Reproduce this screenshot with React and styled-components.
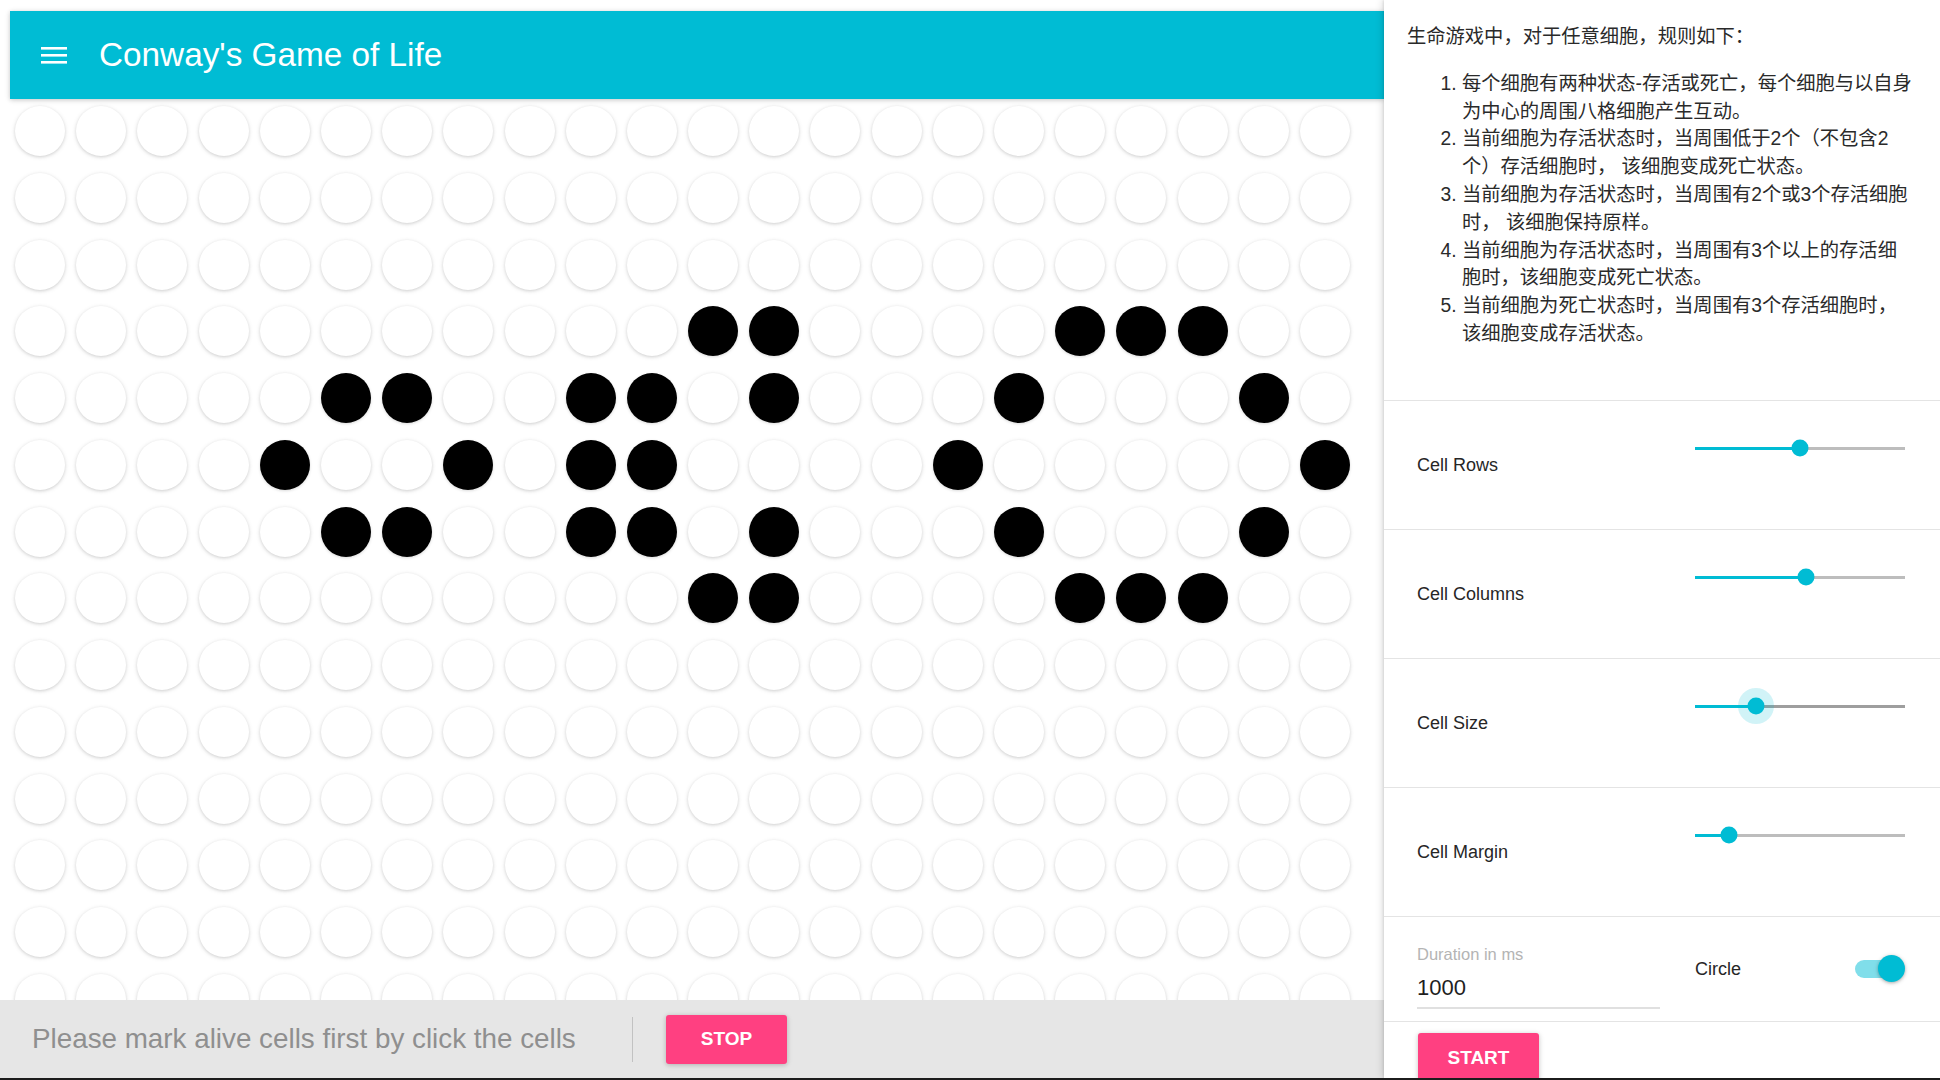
import React from "react";
import styled, { createGlobalStyle } from "styled-components";

const Global = createGlobalStyle`
  html, body { margin: 0; padding: 0; background: #1c1c1c; overflow: hidden; }
  body { font-family: "Liberation Sans", "Noto Sans CJK SC", sans-serif; }
  *, *::before, *::after { box-sizing: border-box; }
`;

const Page = styled.div`
  display: flex;
  width: 1940px;
  height: 1078px;
  background: #fff;
  overflow: hidden;
`;

const LeftPane = styled.main`
  position: relative;
  flex: 1;
  min-width: 0;
  padding: 11px 0 0 10px;
  overflow: hidden;
`;

const AppBar = styled.header`
  position: relative;
  z-index: 1;
  height: 88px;
  display: flex;
  align-items: center;
  padding-left: 31px;
  background: #00bcd4;
  box-shadow: 0 1px 6px rgba(0, 0, 0, 0.12), 0 1px 4px rgba(0, 0, 0, 0.12);
`;

const MenuIcon = styled.svg`
  display: block;
  width: 26px;
  height: 17px;
`;

const Title = styled.h1`
  margin: 0 0 0 32px;
  font-size: 33.3px;
  font-weight: 400;
  color: #fff;
  line-height: 1;
`;

const Board = styled.div`
  display: grid;
  grid-template-columns: repeat(22, 50px);
  column-gap: 11.2px;
  row-gap: 16.75px;
  margin: 7px 0 0 5px;
`;

const Cell = styled.div`
  width: 50px;
  height: 50px;
  border-radius: 50%;
  background: ${(p) => (p.$alive ? "#000" : "#fff")};
  box-shadow: ${(p) =>
    p.$alive
      ? "0 1px 3px rgba(0,0,0,0.15)"
      : "0 1px 5px rgba(0,0,0,0.11), 0 1px 3px rgba(0,0,0,0.1)"};
`;

const Footer = styled.footer`
  position: absolute;
  left: 0;
  right: 0;
  bottom: 0;
  z-index: 2;
  height: 78px;
  display: flex;
  align-items: center;
  padding-left: 32px;
  background: #e6e6e6;
`;

const Hint = styled.span`
  width: 600px;
  font-size: 27.8px;
  color: #8f8f8f;
  white-space: nowrap;
`;

const Divider = styled.span`
  width: 1px;
  height: 45px;
  background: #c2c2c2;
`;

const ActionButton = styled.button`
  width: 121px;
  height: ${(p) => p.$h || 49}px;
  margin-left: ${(p) => p.$ml || 0}px;
  border: 0;
  border-radius: 3px;
  background: #ff4081;
  color: #fff;
  font-family: "Liberation Sans", sans-serif;
  font-size: 19px;
  font-weight: 700;
  box-shadow: 0 1px 6px rgba(0, 0, 0, 0.12), 0 1px 4px rgba(0, 0, 0, 0.12);
  cursor: pointer;
`;

const Panel = styled.aside`
  position: relative;
  z-index: 3;
  flex: none;
  width: 556px;
  height: 100%;
  background: #fff;
  color: #262626;
  overflow: hidden;
  box-shadow: -1px 0 8px rgba(0, 0, 0, 0.16), -1px 0 2px rgba(0, 0, 0, 0.08);
`;

const Intro = styled.section`
  height: 401px;
  padding: 23px 10px 0 23px;
  border-bottom: 1px solid #e4e4e4;
  font-size: 19.3px;
  line-height: 27.8px;
  color: #2a2a2a;
`;

const IntroText = styled.p`
  margin: 0;
`;

const RuleList = styled.ol`
  margin: 19px 0 0;
  padding-left: 55px;
  white-space: nowrap;
`;

const ControlRow = styled.div`
  display: grid;
  grid-template-columns: 278px 210px;
  align-items: center;
  height: ${(p) => p.$h || 129}px;
  padding-left: 33px;
  border-bottom: 1px solid #e4e4e4;
`;

const Label = styled.span`
  font-size: 18px;
  color: #262626;
`;

const SliderBox = styled.div`
  position: relative;
  height: 24px;
  margin-bottom: 34px;
  display: flex;
  align-items: center;
`;

const Track = styled.div`
  position: relative;
  width: 100%;
  height: 3px;
  background: ${(p) => (p.$focused ? "#9e9e9e" : "#bdbdbd")};
`;

const Fill = styled.div`
  position: absolute;
  left: 0;
  top: 0;
  bottom: 0;
  background: #00bcd4;
`;

const Thumb = styled.span`
  position: absolute;
  top: 50%;
  width: 17px;
  height: 17px;
  border-radius: 50%;
  background: #00bcd4;
  transform: translate(-50%, -50%);
  box-shadow: ${(p) => (p.$focused ? "0 0 0 9.5px rgba(0,188,212,0.18)" : "none")};
`;

const Field = styled.div`
  width: 243px;
  margin-top: 15px;
  padding-bottom: 5px;
  border-bottom: 2px solid #e0e0e0;
`;

const FieldLabel = styled.div`
  font-size: 16.5px;
  line-height: 20px;
  color: #b4b4b4;
`;

const FieldValue = styled.div`
  margin-top: 10px;
  font-size: 22px;
  line-height: 28px;
  color: #1f1f1f;
`;

const ToggleLine = styled.div`
  display: flex;
  align-items: center;
  justify-content: space-between;
`;

const Switch = styled.span`
  position: relative;
  width: 50px;
  height: 28px;
`;

const SwitchTrack = styled.span`
  position: absolute;
  left: 0;
  top: 5px;
  width: 46px;
  height: 18px;
  border-radius: 9px;
  background: #80deea;
`;

const SwitchThumb = styled.span`
  position: absolute;
  right: 0;
  top: 0;
  width: 27px;
  height: 27px;
  border-radius: 50%;
  background: #00bcd4;
  box-shadow: 0 1px 5px rgba(0, 0, 0, 0.16), 0 1px 3px rgba(0, 0, 0, 0.2);
`;

const ButtonRow = styled.div`
  padding: 11px 0 0 34px;
`;

const ALIVE = {
  3: [11, 12, 17, 18, 19],
  4: [5, 6, 9, 10, 12, 16, 20],
  5: [4, 7, 9, 10, 15, 21],
  6: [5, 6, 9, 10, 12, 16, 20],
  7: [11, 12, 17, 18, 19],
};

const ROWS = 15;
const COLS = 22;

const rules = [
  ["每个细胞有两种状态-存活或死亡，每个细胞与以自身", "为中心的周围八格细胞产生互动。"],
  ["当前细胞为存活状态时，当周围低于2个（不包含2", "个）存活细胞时， 该细胞变成死亡状态。"],
  ["当前细胞为存活状态时，当周围有2个或3个存活细胞", "时， 该细胞保持原样。"],
  ["当前细胞为存活状态时，当周围有3个以上的存活细", "胞时，该细胞变成死亡状态。"],
  ["当前细胞为死亡状态时，当周围有3个存活细胞时，", "该细胞变成存活状态。"],
];

const sliders = [
  { label: "Cell Rows", value: 50 },
  { label: "Cell Columns", value: 53 },
  { label: "Cell Size", value: 29, focused: true },
  { label: "Cell Margin", value: 16 },
];

function Slider({ value, focused }) {
  return (
    <SliderBox>
      <Track $focused={focused}>
        <Fill style={{ width: `${value}%` }} />
        <Thumb $focused={focused} style={{ left: `${value}%` }} />
      </Track>
    </SliderBox>
  );
}

export default function App() {
  const cells = [];
  for (let r = 0; r < ROWS; r++) {
    for (let c = 0; c < COLS; c++) {
      const alive = (ALIVE[r] || []).includes(c);
      cells.push(<Cell key={`${r}-${c}`} $alive={alive} />);
    }
  }

  return (
    <>
      <Global />
      <Page>
        <LeftPane>
          <AppBar>
            <MenuIcon viewBox="0 0 26 17">
              <rect x="0" y="0" width="26" height="2.6" fill="#fff" />
              <rect x="0" y="7" width="26" height="2.6" fill="#fff" />
              <rect x="0" y="14" width="26" height="2.6" fill="#fff" />
            </MenuIcon>
            <Title>Conway's Game of Life</Title>
          </AppBar>
          <Board>{cells}</Board>
          <Footer>
            <Hint>Please mark alive cells first by click the cells</Hint>
            <Divider />
            <ActionButton $ml={33}>STOP</ActionButton>
          </Footer>
        </LeftPane>
        <Panel>
          <Intro>
            <IntroText>生命游戏中，对于任意细胞，规则如下：</IntroText>
            <RuleList>
              {rules.map(([a, b], i) => (
                <li key={i}>
                  {a}
                  <br />
                  {b}
                </li>
              ))}
            </RuleList>
          </Intro>
          {sliders.map((s) => (
            <ControlRow key={s.label}>
              <Label>{s.label}</Label>
              <Slider value={s.value} focused={s.focused} />
            </ControlRow>
          ))}
          <ControlRow $h={105}>
            <Field>
              <FieldLabel>Duration in ms</FieldLabel>
              <FieldValue>1000</FieldValue>
            </Field>
            <ToggleLine>
              <Label>Circle</Label>
              <Switch>
                <SwitchTrack />
                <SwitchThumb />
              </Switch>
            </ToggleLine>
          </ControlRow>
          <ButtonRow>
            <ActionButton $h={50}>START</ActionButton>
          </ButtonRow>
        </Panel>
      </Page>
    </>
  );
}
